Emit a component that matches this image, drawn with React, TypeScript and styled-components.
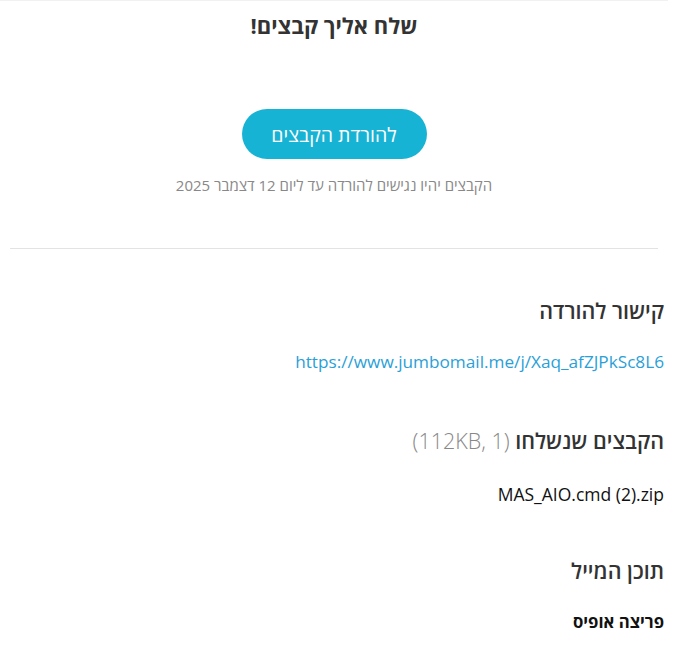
import React from "react";
import styled, { createGlobalStyle } from "styled-components";

const GlobalStyle = createGlobalStyle`
  html, body {
    margin: 0;
    padding: 0;
    background: #ffffff;
  }
  body {
    font-family: "Open Sans", "Liberation Sans", "DejaVu Sans", sans-serif;
    color: #333;
  }
`;

const Page = styled.div`
  width: 668px;
  border-top: 1px solid #f1f1f1;
  direction: rtl;
`;

const Header = styled.div`
  display: flex;
  flex-direction: column;
  align-items: center;
  padding-top: 9px;
`;

const Title = styled.h1`
  margin: 0;
  font-size: 22px;
  line-height: 30px;
  font-weight: 700;
  color: #333;
`;

const DownloadButton = styled.button`
  margin-top: 69px;
  width: 185px;
  height: 50px;
  border: none;
  border-radius: 25px;
  background: #17b3d4;
  color: #fff;
  font-family: inherit;
  font-size: 19.5px;
  font-weight: 500;
  cursor: pointer;
`;

const Expiry = styled.p`
  margin: 16px 0 0;
  font-size: 15px;
  line-height: 20px;
  color: #888;
`;

const Divider = styled.hr`
  margin: 53px 10px 0;
  border: none;
  border-top: 1px solid #e3e3e3;
`;

const Section = styled.section<{ gap: number }>`
  margin-top: ${(p) => p.gap}px;
  padding: 0 4px 0 0;
  display: flex;
  flex-direction: column;
`;

const Heading = styled.h2`
  margin: 0;
  font-size: 21.5px;
  line-height: 28px;
  font-weight: 600;
  color: #333;
`;

const Meta = styled.span`
  direction: ltr;
  unicode-bidi: isolate;
  font-weight: 300;
  color: #888;
`;

const Link = styled.a`
  margin-top: 25px;
  font-size: 17.2px;
  line-height: 24px;
  color: #2a9fd8;
  text-decoration: none;
`;

const FileName = styled.div`
  margin-top: 28px;
  font-size: 17.5px;
  line-height: 22px;
  color: #111;
`;

const Body = styled.div`
  margin-top: 26px;
  font-size: 16.7px;
  line-height: 22px;
  font-weight: 700;
  color: #111;
`;

export default function App() {
  return (
    <Page>
      <GlobalStyle />
      <Header>
        <Title>שלח אליך קבצים!</Title>
        <DownloadButton>להורדת הקבצים</DownloadButton>
        <Expiry>הקבצים יהיו נגישים להורדה עד ליום 12 דצמבר 2025</Expiry>
      </Header>
      <Divider />
      <Section gap={48}>
        <Heading>קישור להורדה</Heading>
        <Link href="#">https://www.jumbomail.me/j/Xaq_afZJPkSc8L6</Link>
      </Section>
      <Section gap={53}>
        <Heading>
          הקבצים שנשלחו <Meta>(112KB, 1)</Meta>
        </Heading>
        <FileName>MAS_AIO.cmd (2).zip</FileName>
      </Section>
      <Section gap={52}>
        <Heading>תוכן המייל</Heading>
        <Body>פריצה אופיס</Body>
      </Section>
    </Page>
  );
}
